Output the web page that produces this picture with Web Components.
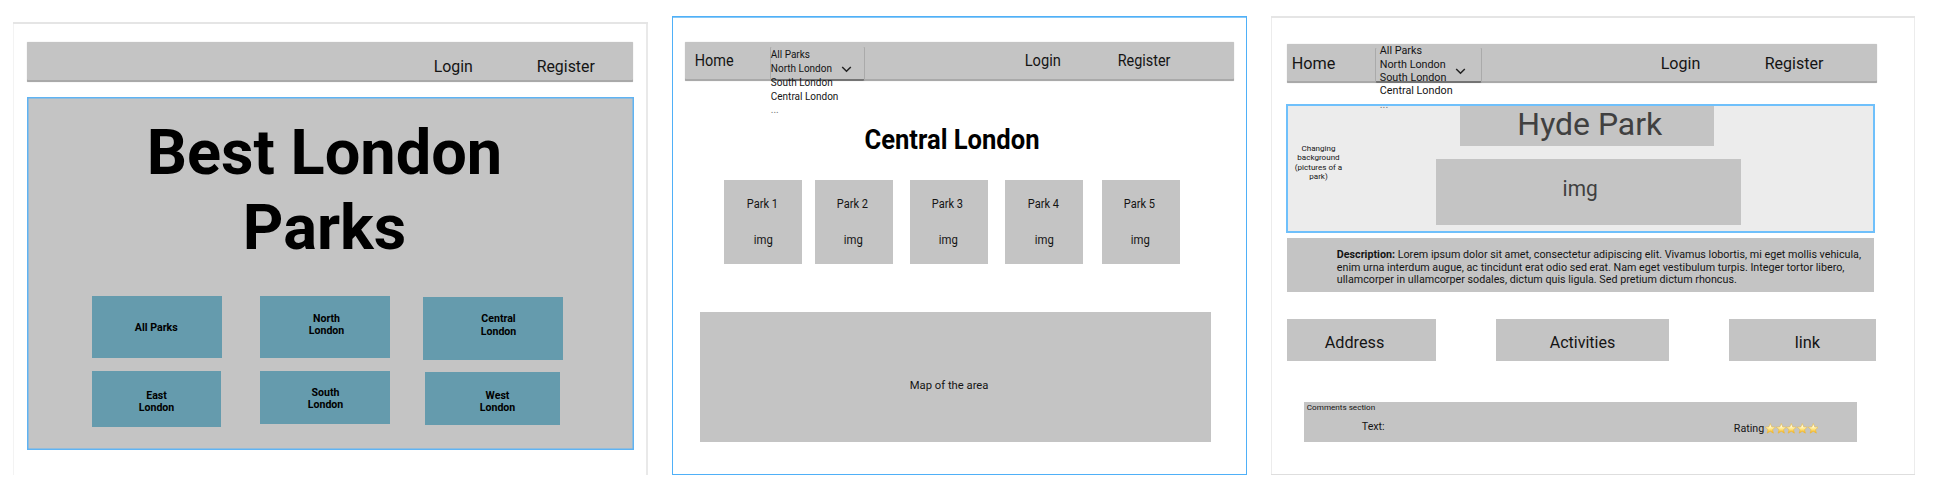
<!DOCTYPE html>
<html lang="en">
<head>
<meta charset="utf-8">
<title>London Parks wireframes</title>
<style>
body { margin: 0; width: 1940px; height: 502px; overflow: hidden; background: #fff; font-family: Roboto, sans-serif; color: #141414; }
</style>
</head>
<body>
<parks-board></parks-board>

<template id="home-tpl">
  <wf-box x="14" y="20" w="606" h="40" kind="nav">
    <wf-label x="407" base="30.5" w="38.5" size="16">Login</wf-label>
    <wf-label x="64" base="30.5" w="57.5" size="16">Register</wf-label>
  </wf-box>
  <wf-box x="14" y="15" w="606.5" h="353" kind="selected" column>
    <wf-label x="121" base="78" w="353" size="62.5" lh="74.6" bold>Best London<br>Parks</wf-label>
    <wf-box y="30.3" h="62">
      <wf-box x="64.7" w="130.3" h="62" kind="tile"><wf-label x="43.8" base="35" w="42.5" size="10.5" bold>All Parks</wf-label></wf-box>
      <wf-box x="38.5" w="129.2" h="62" kind="tile"><wf-label x="48.8" base="26.3" w="35" size="10.5" lh="12.3" bold>North<br>London</wf-label></wf-box>
      <wf-box x="33.7" y="1.5" w="139.6" h="62.5" kind="tile"><wf-label x="57.2" base="25" w="35" size="10.5" lh="12.3" bold>Central<br>London</wf-label></wf-box>
    </wf-box>
    <wf-box y="13.6" h="56">
      <wf-box x="64.7" w="129.3" h="56" kind="tile"><wf-label x="47.2" base="27.4" w="35" size="10.5" lh="12.3" bold>East<br>London</wf-label></wf-box>
      <wf-box x="39.5" w="129.2" h="53" kind="tile"><wf-label x="48" base="24.4" w="35" size="10.5" lh="12.3" bold>South<br>London</wf-label></wf-box>
      <wf-box x="35.4" y="1" w="134.7" h="52.5" kind="tile"><wf-label x="55.1" base="26.5" w="35" size="10.5" lh="12.3" bold>West<br>London</wf-label></wf-box>
    </wf-box>
  </wf-box>
</template>

<template id="area-tpl">
  <wf-box x="13" y="26" w="549" h="39" kind="nav">
    <wf-label x="10.2" base="24.3" w="38.3" size="16">Home</wf-label>
    <wf-select x="37" y="5" w="95" h="34" tx="0.3" base="11" tw="67.2" lh="13.8" cx="4.5" cy="19"></wf-select>
    <wf-label x="159.2" base="24.3" w="35.6" size="16">Login</wf-label>
    <wf-label x="57.8" base="24.3" w="52.2" size="16">Register</wf-label>
  </wf-box>
  <wf-label x="193.3" base="68" w="174" size="27.7" lh="32" bold>Central London</wf-label>
  <wf-box y="24.5" h="84.5">
    <park-card x="52" name="Park 1"></park-card>
    <park-card x="12.6" name="Park 2"></park-card>
    <park-card x="17.1" name="Park 3"></park-card>
    <park-card x="17.1" name="Park 4"></park-card>
    <park-card x="18.9" name="Park 5"></park-card>
  </wf-box>
  <wf-box x="27.6" y="47.3" w="511.3" h="130" kind="block">
    <wf-label x="210.2" base="76.3" w="78.2" size="11.8">Map of the area</wf-label>
  </wf-box>
</template>

<template id="park-tpl">
  <wf-box x="16" y="28" w="590" h="38.7" kind="nav">
    <wf-label x="4.7" base="24.6" w="43" size="16">Home</wf-label>
    <wf-select x="40.8" y="4" w="106.2" h="35" tx="4.3" base="6" tw="72.4" lh="13.3" cx="4" cy="19.5"></wf-select>
    <wf-label x="179.1" base="24.6" w="39" size="16">Login</wf-label>
    <wf-label x="65.1" base="24.6" w="58.1" size="16">Register</wf-label>
  </wf-box>
  <wf-box x="15.4" y="21.3" w="588.6" h="128.7" kind="backdrop">
    <wf-label x="8.7" base="46.7" w="47" size="8" lh="9.35">Changing<br>background<br>(pictures of a<br>park)</wf-label>
    <wf-box x="93.5" w="305" column>
      <wf-box x="24.7" y="2" w="254.2" h="40" kind="block"><wf-label x="57.7" base="28.7" w="143.6" size="32" tone="#404040">Hyde Park</wf-label></wf-box>
      <wf-box y="12.7" w="305" h="66" kind="block"><wf-label x="127.9" base="38.3" w="34.3" size="22" tone="#404040">img</wf-label></wf-box>
    </wf-box>
  </wf-box>
  <wf-box x="16" y="5" w="587" h="54.6" kind="block">
    <wf-label x="49.8" base="20.6" w="523.8" size="10.6" lh="12.5"><b>Description:</b> Lorem ipsum dolor sit amet, consectetur adipiscing elit. Vivamus lobortis, mi eget mollis vehicula,<br>enim urna interdum augue, ac tincidunt erat odio sed erat. Nam eget vestibulum turpis. Integer tortor libero,<br>ullamcorper in ullamcorper sodales, dictum quis ligula. Sed pretium dictum rhoncus.</wf-label>
  </wf-box>
  <wf-box x="15.8" y="26.7" h="42.3">
    <wf-box w="149.6" h="42.3" kind="block"><wf-label x="38.2" base="29.3" w="59" size="16">Address</wf-label></wf-box>
    <wf-box x="59.8" w="172.6" h="42.3" kind="block"><wf-label x="53.4" base="29.3" w="65" size="16">Activities</wf-label></wf-box>
    <wf-box x="60.3" w="146.5" h="42.3" kind="block"><wf-label x="65.5" base="29.3" w="24.7" size="16">link</wf-label></wf-box>
  </wf-box>
  <wf-box x="33.2" y="40.7" w="552.5" h="39.7" kind="block" column>
    <wf-label x="2.6" base="8" w="68" size="8" lh="10">Comments section</wf-label>
    <wf-box h="24">
      <wf-label x="57.9" base="18.4" w="22.5" size="10.6">Text:</wf-label>
      <wf-label x="349.7" base="19.7" w="30" size="10.6">Rating</wf-label>
      <star-rating></star-rating>
    </wf-box>
  </wf-box>
</template>

<script>
const px = (el, name, fallback = 0) => parseFloat(el.getAttribute(name) ?? fallback);

/* Shared geometry: x / y are gaps before the element, w / h its size. */
class WfElement extends HTMLElement {
  shell(html) {
    const root = this.attachShadow({ mode: 'open' });
    const size = ['w', 'h'].map((a, i) => this.hasAttribute(a) ? `${['width', 'height'][i]}:${px(this, a)}px;` : '').join('');
    root.innerHTML = `<style>:host{display:flex;flex:none;box-sizing:border-box;align-items:flex-start;margin:${px(this, 'y')}px 0 0 ${px(this, 'x')}px;${size}}</style>${html}`;
    return root;
  }
}

customElements.define('wf-box', class extends WfElement {
  connectedCallback() {
    if (this.shadowRoot) return;
    this.shell(`<style>
      :host([column]){flex-direction:column}
      :host([kind=nav]){background:#c4c4c4;border-radius:1px;box-shadow:inset 0 -2px 0 #a9a9a9,0 0 1px #bbb}
      :host([kind=block]){background:#c4c4c4}
      :host([kind=tile]){background:#659bad}
      :host([kind=selected]){background:#c4c4c4;box-shadow:inset 0 0 0 1.5px #5fb3f3}
      :host([kind=backdrop]){background:#ececec;box-shadow:inset 0 0 0 2px #6fc0fb}
    </style><slot></slot>`);
  }
});

customElements.define('wf-screen', class extends WfElement {
  connectedCallback() {
    if (this.shadowRoot) return;
    this.shell(`<style>
      :host{flex-direction:column}
      :host([frame=first]){box-shadow:inset 0 2px 0 #e5e5e5,inset 1px 0 0 #f3f3f3,inset -2px 0 0 #e9e9e9}
      :host([frame=active]){box-shadow:inset 0 0 0 1px #4fb0f8,inset 0 2px 0 #86c8f7}
      :host([frame=last]){box-shadow:inset 0 2px 0 #e5e5e5,inset 0 -1px 0 #dedede,inset 1px 0 0 #ececec,inset -1px 0 0 #ececec}
    </style><slot></slot>`);
  }
});

customElements.define('wf-select', class extends WfElement {
  connectedCallback() {
    if (this.shadowRoot) return;
    this.shell(`<style>
      :host{background:#c4c4c4;border-radius:1px;box-shadow:inset 1px 0 0 #aaa,inset -1px 0 0 #aaa,inset 0 -2px 0 #747474}
      svg{display:block;flex:none;margin:${px(this, 'cy')}px 0 0 ${px(this, 'cx') - 1}px}
      span{color:#777}
    </style>
    <wf-label x="${px(this, 'tx')}" base="${px(this, 'base')}" w="${px(this, 'tw')}" size="10.6" lh="${px(this, 'lh')}" left>All Parks<br>North London<br>South London<br>Central London<br><span>...</span></wf-label>
    <svg width="11" height="7" viewBox="0 0 11 7"><path d="M1.2 1 5.5 5.3 9.8 1" fill="none" stroke="#222" stroke-width="1.5"/></svg>`);
  }
});

customElements.define('park-card', class extends WfElement {
  connectedCallback() {
    if (this.shadowRoot) return;
    this.shell(`<style>:host{background:#c4c4c4;width:78px;height:84.3px;flex-direction:column}</style>
      <wf-label x="22.8" base="27.2" w="30.8" size="12" lh="14">${this.getAttribute('name')}</wf-label>
      <wf-label x="29.8" base="33" w="18.6" size="12" lh="14">img</wf-label>`);
  }
});

customElements.define('star-rating', class extends WfElement {
  connectedCallback() {
    if (this.shadowRoot) return;
    const star = '<svg width="10.7" height="11" viewBox="0 0 10.7 11"><path d="M5.3.5 6.7 3.9 10.3 4.2 7.6 6.6 8.4 10.2 5.3 8.3 2.2 10.2 3 6.6.3 4.2 3.9 3.9Z" fill="url(#g)" stroke="#efb92b" stroke-width=".5" stroke-linejoin="round"/></svg>';
    this.shell(`<style>:host{margin:10.3px 0 0 .7px}svg{display:block;flex:none}</style>
      <svg width="0" height="0"><linearGradient id="g" x2="0" y2="1"><stop offset=".3" stop-color="#fffbd9"/><stop offset=".6" stop-color="#ffe27a"/><stop offset="1" stop-color="#f3a914"/></linearGradient></svg>${star.repeat(5)}`);
  }
});

customElements.define('parks-board', class extends HTMLElement {
  connectedCallback() {
    const root = this.attachShadow({ mode: 'open' });
    root.innerHTML = `<style>:host{display:flex;align-items:flex-start;height:502px}</style>
      <wf-screen frame="first" x="13" y="22" w="635" h="453"></wf-screen>
      <wf-screen frame="active" x="24" y="16" w="575" h="459"></wf-screen>
      <wf-screen frame="last" x="24" y="16" w="644" h="459"></wf-screen>`;
    ['home-tpl', 'area-tpl', 'park-tpl'].forEach((id, i) =>
      root.querySelectorAll('wf-screen')[i].append(document.getElementById(id).content.cloneNode(true)));
  }
});

/* Text whose widest line is fitted to w; base is the first baseline's offset. */
customElements.define('wf-label', class extends HTMLElement {
  connectedCallback() {
    if (this.shadowRoot) return;
    const size = px(this, 'size'), lh = px(this, 'lh', size * 1.2), w = px(this, 'w');
    const nudge = size < 13 ? .7 : 0;
    const root = this.attachShadow({ mode: 'open' });
    root.innerHTML = `<style>
      :host{display:block;flex:none;width:${w}px;margin:${px(this, 'base') + nudge - lh / 2 - size * .3418}px 0 ${-nudge}px ${px(this, 'x')}px;font-size:${size}px;line-height:${lh}px;white-space:nowrap;text-align:center;color:${this.getAttribute('tone') || 'inherit'}}
      :host([bold]){font-weight:700;color:#000}
      div{width:max-content;transform-origin:0 0}
      :host([left]) div{text-align:left}
    </style><div><slot></slot></div>`;
    const div = root.querySelector('div');
    if (size < 11 && w > 200) div.style.textAlign = 'left';
    const scale = w / (div.getBoundingClientRect().width - size * .04);
    div.style.transform = `translateX(${-size * .02 * scale}px) scaleX(${scale})`;
  }
});
</script>
</body>
</html>
